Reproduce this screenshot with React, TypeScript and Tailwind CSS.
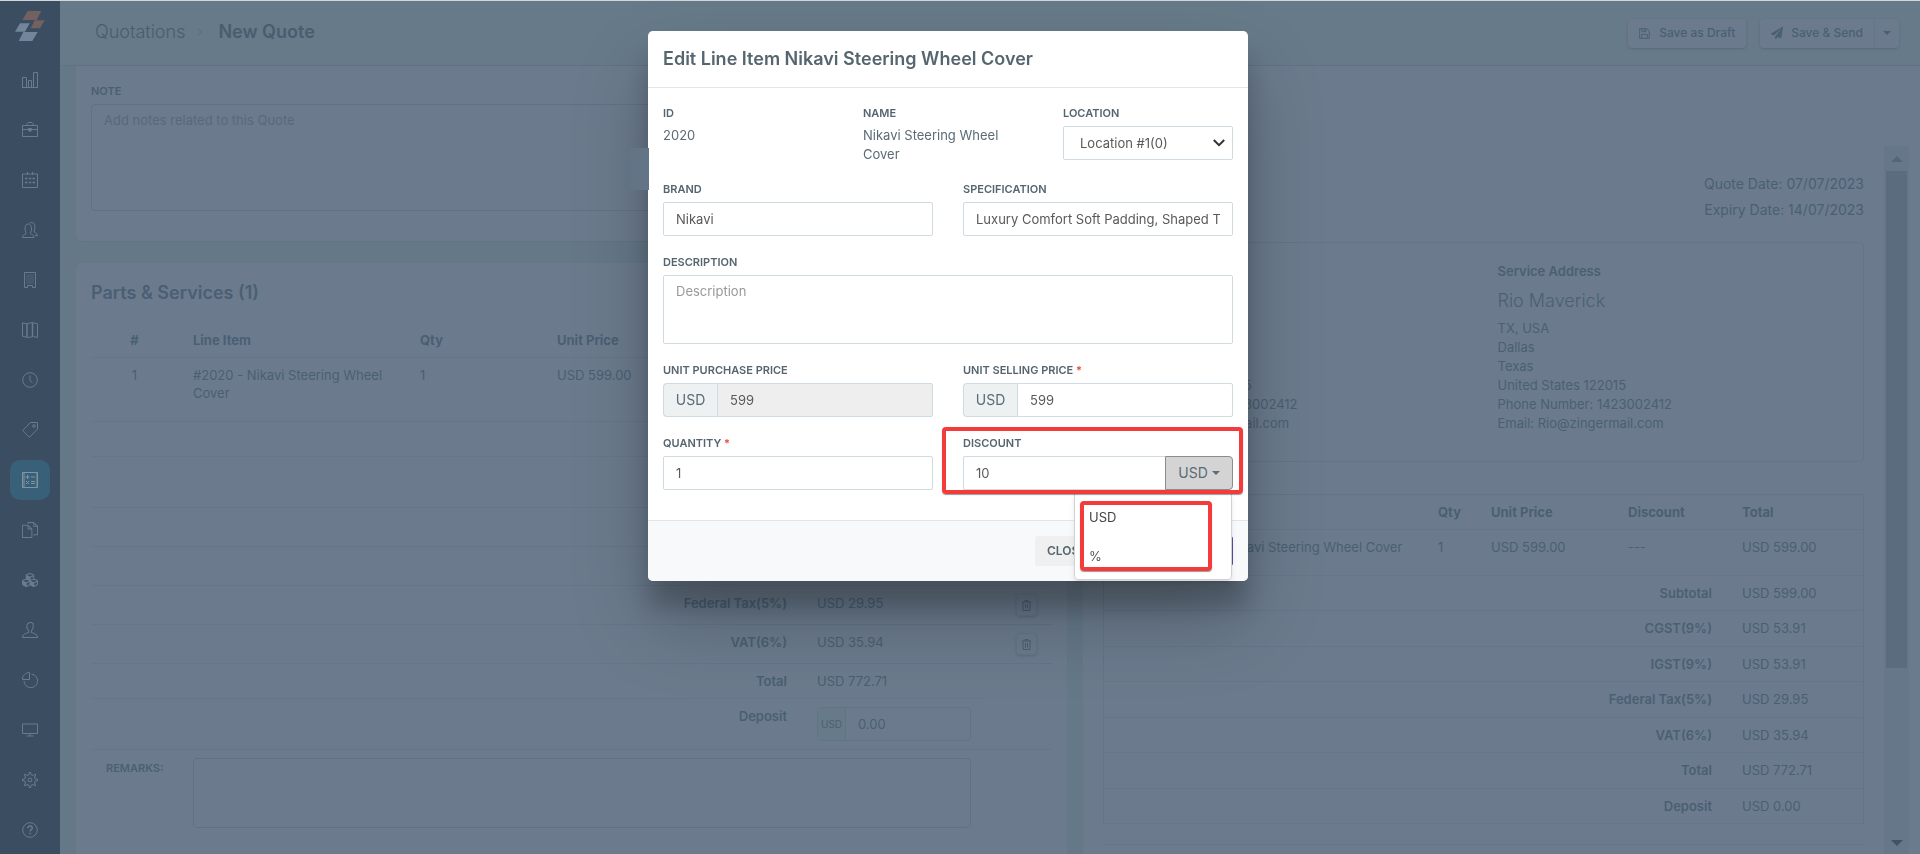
import type { ComponentType, ReactNode } from 'react'
import { TfiFiles, TfiUser, TfiSettings } from 'react-icons/tfi'
import { FaCubes, FaPaperPlane } from 'react-icons/fa'

interface IconProps {
  className?: string
}

function LineIcon({ className, children }: { className?: string; children: ReactNode }) {
  return (
    <svg className={className} viewBox="0 0 16 16" fill="none" stroke="currentColor">
      {children}
    </svg>
  )
}

function BarChartIcon({ className }: IconProps) {
  return (
    <LineIcon className={className}>
      <path d="M.5 5.500h4v10h-4zM6.500 15.500v-7h3v7zM11.500.5h4v15h-4zM0 15.500h16" />
    </LineIcon>
  )
}

function BriefcaseIcon({ className }: IconProps) {
  return (
    <LineIcon className={className}>
      <path d="M.5 3.500h15v11H.5zM5 3.500v-2l1-1h4l1 1v2M.5 7.500H6M10 7.500h5.500" />
      <path d="M6.500 6.500h3v2l-1.500 1-1.500-1z" fill="currentColor" />
    </LineIcon>
  )
}

function CalendarIcon({ className }: IconProps) {
  return (
    <LineIcon className={className}>
      <path d="M.5 2h15v13.500H.5zM5.500 0v3M10.500 0v3" />
      <path d="M3 6.500h2.500M6.800 6.500h2.500M10.500 6.500H13M3 10.500h2.500M6.800 10.500h2.500M10.500 10.500H13" strokeWidth="1.600" />
    </LineIcon>
  )
}

function UsersIcon({ className }: IconProps) {
  return (
    <LineIcon className={className}>
      <path d="M.5 15.500c0-3 2.200-2.600 3.700-3.800.4-.8-1.200-2-1.200-4.700C3 3.500 4.200 2 6.300 2s3.200 1.500 3.200 5c0 2.700-1.500 3.900-1 4.700 1.300 1.200 3.500.8 3.500 3.800z" />
      <path d="M7.500 1.200C8 .6 8.800.5 9.900.5c2.100 0 3 1.700 3 5 0 2.200-1.200 3.300-.7 4.300.9 1.300 3.300 1.200 3.300 3.700H13" />
    </LineIcon>
  )
}

function BuildingIcon({ className }: IconProps) {
  return (
    <LineIcon className={className}>
      <path d="M2.500.5h11v15h-3v-2h-5v2h-3z" />
      <path d="M4.500 3h7M4.500 5h7M4.500 7h7M4.500 9h7M4.500 11h7" strokeDasharray="1 1" />
    </LineIcon>
  )
}

function MapIcon({ className }: IconProps) {
  return (
    <LineIcon className={className}>
      <path d="M.5.8l4 1 1-.3 5-1 5 1.300v13.700l-4-1-1 .3-5 .7-5-1.300z" />
      <path d="M5 1.500v13.500M10.500 1v13.500" strokeWidth="1.500" />
    </LineIcon>
  )
}

function ClockIcon({ className }: IconProps) {
  return (
    <LineIcon className={className}>
      <circle cx="8" cy="8" r="7.300" />
      <path d="M8 3.500v5l2.500 2" />
    </LineIcon>
  )
}

function TagIcon({ className }: IconProps) {
  return (
    <LineIcon className={className}>
      <path d="M8.500.5h7v6.500L7.500 15.300.7 8.500z" />
      <circle cx="12" cy="4" r="1.300" />
    </LineIcon>
  )
}

function CalculatorIcon({ className }: IconProps) {
  return (
    <LineIcon className={className}>
      <path d="M.5.5h15v15H.5zM2 .5v15M15 .5v15" />
      <path d="M3.500 5h4M5.500 3v4M9 5h4M4 9l3 3M7 9l-3 3M9 9.500h4M9 11.500h4" />
    </LineIcon>
  )
}

function PieChartIcon({ className }: IconProps) {
  return (
    <LineIcon className={className}>
      <path d="M.5 7.500c0-4 3-7 7-7v7z" />
      <path d="M9.500 2.100A6.800 6.800 0 1 1 2 9" />
    </LineIcon>
  )
}

function DesktopIcon({ className }: IconProps) {
  return (
    <LineIcon className={className}>
      <path d="M.5 2h15v9.500H.5zM8 11.500V14M4.500 14h7" />
    </LineIcon>
  )
}

function HelpIcon({ className }: IconProps) {
  return (
    <LineIcon className={className}>
      <circle cx="8" cy="8" r="7.300" />
      <path d="M5.800 6.200C5.800 3 10.500 3.500 10.300 6.200 10.200 7.700 8 7.600 8 9.500M8 10.700v1.500" strokeWidth="1.500" />
    </LineIcon>
  )
}

function TrashIcon({ className }: IconProps) {
  return (
    <svg className={className} viewBox="0 0 11 11" fill="none" stroke="currentColor">
      <path d="M1 2h9M4 2V.5h3V2M2 2v8.500h7V2M4.500 4v4.500M6.500 4v4.500" />
    </svg>
  )
}

function FloppyIcon({ className }: IconProps) {
  return (
    <svg className={className} viewBox="0 0 12 12" fill="none" stroke="currentColor">
      <path d="M.7.700h7.800l2.800 2.800v7.800H.7zM3 11V7h6v4" />
      <path d="M3.200 1v3h4.300V1M6 1.500v2" />
    </svg>
  )
}

function Caret() {
  return (
    <svg className="h-1 w-2" viewBox="0 0 8 4">
      <path d="M0 0h8L4 4z" fill="currentColor" />
    </svg>
  )
}

function Logo() {
  return (
    <svg className="h-[30px] w-[30px]" viewBox="0 0 30 30">
      <path d="M12.700 0h13.600l-4.600 9H7.300zM19.700 9.300h10l-4.700 8h-9.300z" fill="#73605f" />
      <path d="M5 12.300h9.700l-4.700 8.400H0zM8.300 21h14.400l-5.400 9H3.700z" fill="#72859a" />
    </svg>
  )
}

const navItems: { name: string; icon: ComponentType<IconProps>; active?: boolean }[] = [
  { name: 'Dashboard', icon: BarChartIcon },
  { name: 'Jobs', icon: BriefcaseIcon },
  { name: 'Calendar', icon: CalendarIcon },
  { name: 'Customers', icon: UsersIcon },
  { name: 'Properties', icon: BuildingIcon },
  { name: 'Map', icon: MapIcon },
  { name: 'Timesheets', icon: ClockIcon },
  { name: 'Tags', icon: TagIcon },
  { name: 'Quotations', icon: CalculatorIcon, active: true },
  { name: 'Invoices', icon: TfiFiles },
  { name: 'Inventory', icon: FaCubes },
  { name: 'Team', icon: TfiUser },
  { name: 'Reports', icon: PieChartIcon },
  { name: 'Assets', icon: DesktopIcon },
  { name: 'Settings', icon: TfiSettings },
  { name: 'Help', icon: HelpIcon },
]

const previewTotals = [
  { label: 'Subtotal', value: 'USD 599.00' },
  { label: 'CGST(9%)', value: 'USD 53.91' },
  { label: 'IGST(9%)', value: 'USD 53.91' },
  { label: 'Federal Tax(5%)', value: 'USD 29.95' },
  { label: 'VAT(6%)', value: 'USD 35.94' },
  { label: 'Total', value: 'USD 772.71' },
  { label: 'Deposit', value: 'USD 0.00' },
]

const taxes = [
  { label: 'CGST(9%)', value: 'USD 53.91' },
  { label: 'IGST(9%)', value: 'USD 53.91' },
  { label: 'Federal Tax(5%)', value: 'USD 29.95' },
  { label: 'VAT(6%)', value: 'USD 35.94' },
]

function Sidebar() {
  return (
    <nav className="flex w-[60px] shrink-0 flex-col items-center bg-[#3b4d61] pt-[10px]">
      <a href="#" aria-label="Home" className="mb-[14px] block">
        <Logo />
      </a>
      {navItems.map(({ name, icon: Icon, active }) => (
        <a key={name} href="#" aria-label={name} className="flex h-[50px] shrink-0 items-center">
          <span
            className={`flex h-10 w-10 items-center justify-center rounded-[10px] ${
              active ? 'bg-[#396079] text-[#8294a3]' : 'text-[#687b8f]'
            }`}
          >
            <Icon className="h-4 w-4" />
          </span>
        </a>
      ))}
    </nav>
  )
}

function Header() {
  return (
    <header className="flex h-[65px] shrink-0 items-center justify-between border-b border-[#607284] bg-[#677a89] pr-[21px] pl-[35px]">
      <h1 className="flex items-center pb-[2px] text-lg text-[#485d70]">
        <a href="#" className="font-light">Quotations</a>
        <svg className="mr-[15px] ml-3 h-2 w-[6px]" viewBox="0 0 6 8" fill="none" stroke="#556a7b">
          <path d="M1 .5L4.500 4 1 7.500" />
        </svg>
        <span className="font-semibold">New Quote</span>
      </h1>
      <div className="flex items-center gap-[14px] text-xs font-medium text-[#4a5f73]">
        <button className="flex h-[29px] items-center gap-[9px] rounded-sm bg-[#6b7b8d] px-[11px] shadow-sm">
          <FloppyIcon className="h-[11px] w-[11px]" />
          Save as Draft
        </button>
        <div className="flex h-[29px] rounded-sm bg-[#6b7b8d] shadow-sm">
          <button className="flex items-center gap-2 px-[11px]">
            <FaPaperPlane className="h-3 w-3" />
            Save &amp; Send
          </button>
          <button className="flex w-[25px] items-center justify-center border-l border-[#647689]" aria-label="More send options">
            <Caret />
          </button>
        </div>
      </div>
    </header>
  )
}

const cell = 'border-b border-[#64768a] px-[15px] pt-2 align-top'

function QuoteEditor() {
  return (
    <div className="flex w-[55%] min-w-0 flex-col bg-[#657888] px-4">
      <section className="h-[176px] shrink-0 rounded-b-md border-b border-[#607285] bg-[#6b7b8d] px-[15px] pt-4">
        <label htmlFor="note" className="block text-[11px] leading-[18px] font-semibold">NOTE</label>
        <textarea
          id="note"
          className="mt-1 block h-[107px] w-full resize-none rounded-sm border border-[#5f7285] px-3 py-[6px] placeholder-[#58697b]"
          placeholder="Add notes related to this Quote"
        />
      </section>

      <section className="mt-[21px] flex-1 rounded-t-md bg-[#6b7b8d] px-[15px] pt-[14px]">
        <h2 className="mb-[14px] text-lg leading-8 font-semibold">Parts &amp; Services (1)</h2>
        <table className="w-full table-fixed border-separate border-spacing-0 text-left">
          <colgroup>
            <col className="w-[87px]" />
            <col className="w-[227px]" />
            <col className="w-[137px]" />
            <col />
            <col className="w-[184px]" />
            <col className="w-[66px]" />
          </colgroup>
          <thead>
            <tr className="h-[35px] font-semibold">
              <th className={`${cell} text-center`}>#</th>
              <th className={cell}>Line Item</th>
              <th className={cell}>Qty</th>
              <th className={cell}>Unit Price</th>
              <th className={cell}>Total</th>
              <th className={cell} />
            </tr>
          </thead>
          <tbody>
            <tr className="h-16">
              <td className={`${cell} text-center`}>1</td>
              <td className={cell}>#2020 - Nikavi Steering Wheel Cover</td>
              <td className={cell}>1</td>
              <td className={cell}>USD 599.00</td>
              <td className={cell}>USD 599.00</td>
              <td className={cell} />
            </tr>
            <tr className="h-[35px]">
              <td colSpan={4} className={`${cell} text-right font-semibold`}>Subtotal</td>
              <td className={cell}>USD 599.00</td>
              <td className={cell} />
            </tr>
            <tr className="h-[51px]">
              <td colSpan={4} className={`${cell} text-right font-semibold`}>Discount</td>
              <td className={cell}>---</td>
              <td className={cell} />
            </tr>
            {taxes.map((tax) => (
              <tr key={tax.label} className="h-[39px]">
                <td colSpan={4} className={`${cell} text-right font-semibold`}>{tax.label}</td>
                <td className={cell}>{tax.value}</td>
                <td className={`${cell} text-right`}>
                  <button
                    className="inline-flex h-[22px] w-[21px] items-center justify-center rounded-sm border border-[#64768a] shadow-sm"
                    aria-label={`Remove ${tax.label}`}
                  >
                    <TrashIcon className="h-[11px] w-[11px]" />
                  </button>
                </td>
              </tr>
            ))}
            <tr className="h-[35px]">
              <td colSpan={4} className={`${cell} text-right font-semibold`}>Total</td>
              <td className={cell}>USD 772.71</td>
              <td />
            </tr>
            <tr className="h-[51px]">
              <td colSpan={4} className={`${cell} text-right font-semibold`}>
                <label htmlFor="deposit">Deposit</label>
              </td>
              <td className={cell}>
                <div className="flex h-[34px] rounded-sm border border-[#5f7487]">
                  <span className="flex w-7 items-center justify-center border-r border-[#5f7487] bg-[#667a8a] text-[10px]">USD</span>
                  <input id="deposit" className="min-w-0 flex-1 px-3 text-[13px]" defaultValue="0.00" />
                </div>
              </td>
              <td className={cell} />
            </tr>
            <tr>
              <td className="pt-[9px] pl-[15px] align-top text-[11px] font-semibold">
                <label htmlFor="remarks">REMARKS:</label>
              </td>
              <td colSpan={4} className="px-[15px] pt-2">
                <textarea id="remarks" className="block h-[70px] w-full resize-none rounded-sm border border-[#5f7285]" />
              </td>
              <td />
            </tr>
          </tbody>
        </table>
      </section>
    </div>
  )
}

function Address({ title }: { title: string }) {
  return (
    <address className="leading-[19px] not-italic">
      <h3 className="font-semibold">{title}</h3>
      <p className="mt-2 mb-[6px] text-lg leading-6 font-light">Rio Maverick</p>
      <p>TX, USA</p>
      <p>Dallas</p>
      <p>Texas</p>
      <p>United States 122015</p>
      <p>Phone Number: 1423002412</p>
      <p>Email: Rio@zingermail.com</p>
    </address>
  )
}

function QuotePreview() {
  return (
    <div className="flex w-[45%] min-w-0 bg-[#6b7b8d] pt-20 pr-[11px] pl-5">
      <div className="min-w-0 flex-1 pr-5">
        <div className="pt-[25px] text-right text-sm leading-[26px]">
          <p>Quote Date: 07/07/2023</p>
          <p>Expiry Date: 14/07/2023</p>
        </div>
        <div className="mt-[19px] grid h-[220px] grid-cols-2 rounded-[4px] border border-[#627487] px-[19px] pt-[19px]">
          <Address title="Billing Address" />
          <div className="pl-[14px]">
            <Address title="Service Address" />
          </div>
        </div>
        <table className="mt-8 w-full table-fixed border-separate border-spacing-0 border-x border-t border-[#627487] text-left">
          <colgroup>
            <col className="w-[54px]" />
            <col />
            <col className="w-[53px]" />
            <col className="w-[137px]" />
            <col className="w-[114px]" />
            <col className="w-[136px]" />
          </colgroup>
          <thead>
            <tr className="h-[35px] font-semibold">
              <th className={cell}>#</th>
              <th className={cell}>Line Item</th>
              <th className={cell}>Qty</th>
              <th className={cell}>Unit Price</th>
              <th className={cell}>Discount</th>
              <th className={cell}>Total</th>
            </tr>
          </thead>
          <tbody>
            <tr className="h-[46px]">
              <td className={cell}>1</td>
              <td className={`${cell} whitespace-nowrap`}>#2020 - Nikavi Steering Wheel Cover</td>
              <td className={cell}>1</td>
              <td className={cell}>USD 599.00</td>
              <td className={cell}>---</td>
              <td className={cell}>USD 599.00</td>
            </tr>
            {previewTotals.map((row) => (
              <tr key={row.label} className="odd:h-9 even:h-[35px]">
                <td colSpan={5} className={`${cell} text-right font-semibold`}>{row.label}</td>
                <td className={cell}>{row.value}</td>
              </tr>
            ))}
          </tbody>
        </table>
        <hr className="mt-5 border-[#64768a]" />
      </div>
      <div className="flex w-[25px] flex-col items-center bg-[#657789]">
        <div className="flex h-[25px] items-center">
          <svg className="h-[6px] w-3" viewBox="0 0 12 6"><path d="M6 0l6 6H0z" fill="#54677a" /></svg>
        </div>
        <div className="mx-[2px] flex-[497] self-stretch bg-[#5b6c7e]" />
        <div className="flex flex-[178] items-end pb-2">
          <svg className="h-[6px] w-3" viewBox="0 0 12 6"><path d="M0 0h12L6 6z" fill="#3f5366" /></svg>
        </div>
      </div>
    </div>
  )
}

interface FieldProps {
  id: string
  label: string
  required?: boolean
  children: ReactNode
}

function Field({ id, label, required, children }: FieldProps) {
  return (
    <div className="relative">
      <label htmlFor={id} className="mb-1 block text-[11px] leading-[18px] font-semibold text-[#55656f]">
        {label}
        {required && <span className="text-[#e74c3c]"> *</span>}
      </label>
      {children}
    </div>
  )
}

const control = 'block h-[34px] w-full rounded-xs border border-[#cfdbe0] bg-white px-3 text-[13px] text-[#595959]'

function EditLineItemModal() {
  return (
    <div className="fixed inset-0 flex items-start justify-center pt-[31px] pr-6">
      <div
        role="dialog"
        aria-labelledby="modal-title"
        className="relative w-[600px] rounded-[5px] bg-white text-[#5b6b75] shadow-[0_27px_24px_0_rgba(0,0,0,0.2),0_40px_77px_0_rgba(0,0,0,0.22)]"
      >
        <div className="absolute top-[117px] -left-[18px] h-[42px] w-[19px] bg-[#627485]" />
        <div className="border-b border-[#e2e6e8] px-[15px] pt-3 pb-3">
          <h2 id="modal-title" className="text-lg leading-8 font-semibold text-[#56666f]">Edit Line Item Nikavi Steering Wheel Cover</h2>
        </div>

        <form className="px-[15px] pt-4 pb-[30px]">
          <div className="grid grid-cols-3 gap-[30px]">
            <div>
              <p className="mb-1 text-[11px] leading-[18px] font-semibold text-[#55656f]">ID</p>
              <p className="leading-[19px]">2020</p>
            </div>
            <div>
              <p className="mb-1 text-[11px] leading-[18px] font-semibold text-[#55656f]">NAME</p>
              <p className="leading-[19px]">Nikavi Steering Wheel Cover</p>
            </div>
            <Field id="location" label="LOCATION">
              <div className="relative">
                <select id="location" className={`${control} appearance-none pl-4`}>
                  <option>Location #1(0)</option>
                </select>
                <svg className="pointer-events-none absolute top-[13px] right-2 h-2 w-3" viewBox="0 0 12 8" fill="none" stroke="#333" strokeWidth="2">
                  <path d="M.8 1L6 6.200 11.200 1" />
                </svg>
              </div>
            </Field>
          </div>

          <div className="mt-4 grid grid-cols-2 gap-x-[30px] gap-y-[17px]">
            <Field id="brand" label="BRAND">
              <input id="brand" className={control} defaultValue="Nikavi" />
            </Field>
            <Field id="specification" label="SPECIFICATION">
              <input id="specification" className={control} defaultValue="Luxury Comfort Soft Padding, Shaped To Fit" />
            </Field>
            <div className="col-span-2">
              <Field id="description" label="DESCRIPTION">
                <textarea
                  id="description"
                  className="block h-[69px] w-full resize-none rounded-xs border border-[#cfdbe0] px-3 py-[6px] placeholder-[#999]"
                  placeholder="Description"
                />
              </Field>
            </div>
            <Field id="purchase" label="UNIT PURCHASE PRICE">
              <div className="flex">
                <span className="flex w-[54px] items-center justify-center rounded-l-[4px] border border-r-0 border-[#cfdbe0] bg-[#edf1f2] text-sm">USD</span>
                <input id="purchase" className="h-[34px] min-w-0 flex-1 rounded-r-xs border border-[#cfdbe0] bg-[#eee] px-3 text-[#595959]" defaultValue="599" readOnly />
              </div>
            </Field>
            <Field id="selling" label="UNIT SELLING PRICE" required>
              <div className="flex">
                <span className="flex w-[54px] items-center justify-center rounded-l-[4px] border border-r-0 border-[#cfdbe0] bg-[#edf1f2] text-sm">USD</span>
                <input id="selling" className="h-[34px] min-w-0 flex-1 rounded-r-xs border border-[#cfdbe0] px-3 text-[#595959]" defaultValue="599" />
              </div>
            </Field>
            <Field id="quantity" label="QUANTITY" required>
              <input id="quantity" className={control} defaultValue="1" />
            </Field>
            <Field id="discount" label="DISCOUNT">
              <div className="relative z-10 flex">
                <input id="discount" className="h-[34px] min-w-0 flex-1 rounded-l-xs border border-r-0 border-[#cfdbe0] px-3 text-[#595959]" defaultValue="10" />
                <button type="button" className="flex w-[68px] items-center justify-center gap-1 rounded-r-[4px] border border-[#8c8c8c] bg-[#d4d4d4] text-sm">
                  USD
                  <Caret />
                </button>
                <div className="absolute top-full right-px mt-px w-[158px] rounded-[4px] border border-[#d0d3d6] bg-white pt-[5px] pb-1 shadow-md">
                  <button type="button" className="block h-[39px] w-full px-[14px] text-left text-[#444]">USD</button>
                  <button type="button" className="block h-[39px] w-full px-[14px] text-left text-[#555]">%</button>
                  <div className="pointer-events-none absolute top-[9px] left-[5px] h-[70px] w-[132px] rounded-[4px] border-4 border-[#f43b3b] shadow-[0_1px_1px_rgba(0,0,0,0.4)]" />
                </div>
              </div>
              <div className="pointer-events-none absolute -top-[7px] -right-[10px] -bottom-1 -left-[21px] z-20 rounded-[4px] border-4 border-[#f43b3b] shadow-[0_1px_1px_rgba(0,0,0,0.4)]" />
            </Field>
          </div>
        </form>

        <div className="flex justify-end gap-[6px] rounded-b-[5px] border-t border-[#e2e6e8] bg-[#f8f9fb] p-[15px]">
          <button type="button" className="h-[30px] w-[68px] rounded-[3px] bg-[#f0f0f0] px-3 text-left text-xs font-semibold text-[#55656f]">CLOSE</button>
          <button type="button" aria-label="Update" className="h-[30px] w-[124px] rounded-[3px] bg-[#5b4aa5]" />
        </div>
      </div>
    </div>
  )
}

export default function App() {
  return (
    <div className="flex h-screen overflow-hidden border-t border-[#d3d6d8] font-['Inter',sans-serif] text-[13px] leading-[18px] text-[#4a5f73]">
      <Sidebar />
      <div className="flex min-w-0 flex-1 flex-col">
        <Header />
        <main className="flex min-h-0 flex-1">
          <QuoteEditor />
          <QuotePreview />
        </main>
      </div>
      <EditLineItemModal />
    </div>
  )
}
